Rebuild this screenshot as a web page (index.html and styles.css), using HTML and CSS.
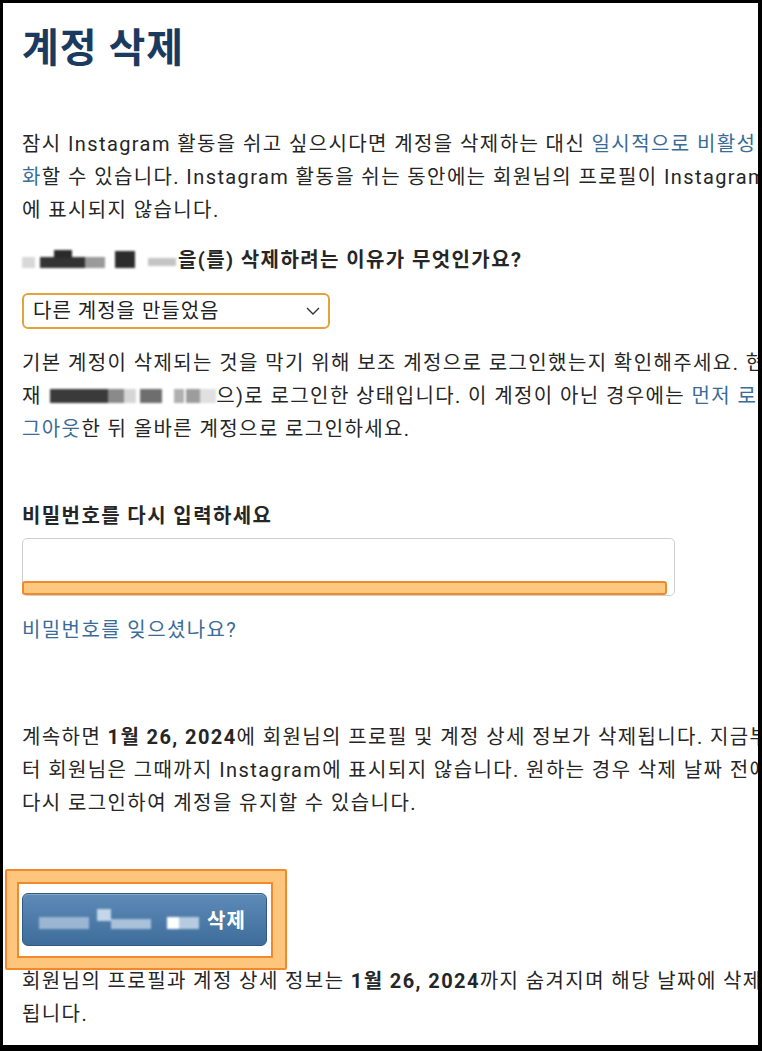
FILE: index.html
```html
<!DOCTYPE html>
<html>

<head>
    <meta charset="utf-8">
    <title>계정 삭제</title>
    <link rel="stylesheet" href="styles.css">
</head>

<body>
    <div class="frame">
        <div class="page">

            <h1 class="title">계정 삭제</h1>

            <p class="text intro">잠시 Instagram 활동을 쉬고 싶으시다면 계정을 삭제하는 대신 <a class="link">일시적으로 비활성<br>화</a>할 수 있습니다. Instagram 활동을 쉬는 동안에는 회원님의 프로필이 Instagram<br>에 표시되지 않습니다.</p>

            <p class="question"><span class="blur q-blur"><i class="b1"></i><i class="b2"></i><i class="b3"></i><i class="b4"></i><i class="b5"></i><i class="b6"></i></span>을(를) 삭제하려는 이유가 무엇인가요?</p>

            <div class="select">
                <span>다른 계정을 만들었음</span>
                <svg class="chevron" width="14" height="8" viewBox="0 0 14 8"><polyline points="1,1 7,7 13,1" fill="none" stroke="#333" stroke-width="1.4"/></svg>
            </div>

            <p class="text notice">기본 계정이 삭제되는 것을 막기 위해 보조 계정으로 로그인했는지 확인해주세요. 현<br>재 <span class="blur u-blur"><i class="c1"></i><i class="c2"></i><i class="c3"></i><i class="c4"></i><i class="c5"></i><i class="c6"></i><i class="c7"></i></span>으)로 로그인한 상태입니다. 이 계정이 아닌 경우에는 <a class="link">먼저 로<br>그아웃</a>한 뒤 올바른 계정으로 로그인하세요.</p>

            <label class="label">비밀번호를 다시 입력하세요</label>
            <div class="input-wrap">
                <div class="input"></div>
                <div class="mark-bar"></div>
            </div>

            <a class="link forgot">비밀번호를 잊으셨나요?</a>

            <p class="text info">계속하면 <b>1월 26, 2024</b>에 회원님의 프로필 및 계정 상세 정보가 삭제됩니다. 지금부<br>터 회원님은 그때까지 Instagram에 표시되지 않습니다. 원하는 경우 삭제 날짜 전에<br>다시 로그인하여 계정을 유지할 수 있습니다.</p>

            <div class="button-wrap">
                <div class="mark-box"><div class="mark-inner"></div></div>
                <button class="delete-btn"><span class="blur btn-blur"><i class="d1"></i><i class="d2"></i><i class="d3"></i><i class="d4"></i><i class="d5"></i></span>삭제</button>
            </div>

            <p class="text last">회원님의 프로필과 계정 상세 정보는 <b>1월 26, 2024</b>까지 숨겨지며 해당 날짜에 삭제<br>됩니다.</p>

        </div>
    </div>
</body>

</html>
```

FILE: styles.css
```css
html, body {
    margin: 0;
    background: #000;
}

.frame {
    box-sizing: border-box;
    width: 762px;
    height: 1051px;
    border-style: solid;
    border-color: #000;
    border-width: 3px 4px 6px 3px;
    background: #fff;
    overflow: hidden;
}

.page {
    padding: 0 0 0 19px;
    font-family: Roboto, "Noto Sans CJK KR", sans-serif;
    font-size: 20px;
    line-height: 33px;
    letter-spacing: 1.4px;
    color: #262626;
    white-space: nowrap;
}

.title {
    margin: 22px 0 0;
    font-size: 40px;
    line-height: 48px;
    font-weight: 700;
    letter-spacing: 1px;
    color: #1b3a60;
}

.text {
    margin: 0;
}

.text b {
    font-weight: 700;
}

.link {
    color: #3a6c98;
    text-decoration: none;
}

.intro {
    margin-top: 55px;
}

.question {
    margin: 17px 0 0;
    font-weight: 700;
}

.blur {
    display: inline-block;
    position: relative;
    vertical-align: middle;
    filter: blur(1.2px);
}

.blur i {
    position: absolute;
    display: block;
}

/* pixelated username in question */
.q-blur {
    width: 156px;
    height: 20px;
    margin-top: -4px;
}
.q-blur .b1 { left: 0; top: 7px; width: 13px; height: 11px; background: #d8d8d8; }
.q-blur .b2 { left: 18px; top: 7px; width: 45px; height: 11px; background: #333; }
.q-blur .b3 { left: 32px; top: 0; width: 18px; height: 8px; background: #2a2a2a; }
.q-blur .b4 { left: 63px; top: 7px; width: 20px; height: 11px; background: #9a9a9a; }
.q-blur .b5 { left: 93px; top: 1px; width: 20px; height: 17px; background: #2c2c2c; }
.q-blur .b6 { left: 126px; top: 8px; width: 28px; height: 8px; background: #c4c4c4; }

.select {
    box-sizing: border-box;
    display: flex;
    align-items: center;
    justify-content: space-between;
    width: 308px;
    height: 36px;
    margin-top: 16px;
    padding: 0 8px 0 9px;
    border: 2.5px solid #e4a23a;
    border-radius: 6px;
    background: #fff;
    color: #222;
    letter-spacing: 1px;
}

.notice {
    margin-top: 18px;
}

/* pixelated username in notice */
.u-blur {
    width: 168px;
    height: 14px;
    margin-top: -3px;
}
.u-blur .c1 { left: 2px; top: 0; width: 58px; height: 14px; background: #3a3a3a; }
.u-blur .c2 { left: 60px; top: 0; width: 16px; height: 14px; background: #8a8a8a; }
.u-blur .c3 { left: 76px; top: 0; width: 12px; height: 14px; background: #d6d6d6; }
.u-blur .c4 { left: 92px; top: 0; width: 22px; height: 14px; background: #6e6e6e; }
.u-blur .c5 { left: 126px; top: 0; width: 10px; height: 14px; background: #b0b0b0; }
.u-blur .c6 { left: 138px; top: 0; width: 14px; height: 14px; background: #9c9c9c; }
.u-blur .c7 { left: 152px; top: 0; width: 16px; height: 14px; background: #e0e0e0; }

.label {
    display: block;
    margin-top: 54px;
    font-weight: 700;
}

.input-wrap {
    position: relative;
    width: 653px;
    height: 58px;
    margin-top: 5px;
}

.input {
    box-sizing: border-box;
    height: 58px;
    border: 1px solid #d0d0d0;
    border-radius: 5px;
    background: #fff;
}

.mark-bar {
    position: absolute;
    left: 0;
    right: 8px;
    bottom: 1px;
    height: 14px;
    box-sizing: border-box;
    border: 2px solid #ee8a2e;
    border-radius: 3px;
    background: #fec97f;
}

.forgot {
    display: block;
    margin-top: 18px;
}

.info {
    margin-top: 74px;
}

.button-wrap {
    position: relative;
    width: 245px;
    margin-top: 73px;
}

.mark-box {
    position: absolute;
    left: -17px;
    top: -24px;
    width: 282px;
    height: 101px;
    box-sizing: border-box;
    border: 2px solid #f08a2c;
    border-radius: 2px;
    background: #fdc67c;
}

.mark-inner {
    position: absolute;
    left: 10px;
    top: 11px;
    width: 256px;
    height: 76px;
    box-sizing: border-box;
    border: 2px solid #f08a2c;
    background: #fff;
}

.delete-btn {
    position: relative;
    display: flex;
    align-items: center;
    width: 245px;
    height: 53px;
    padding: 0 0 0 4px;
    border: 1px solid #2f5a86;
    border-radius: 6px;
    background: linear-gradient(#5d8ab7, #3f6d9b);
    box-shadow: inset 0 1px 0 rgba(255, 255, 255, 0.25);
    font-family: Roboto, "Noto Sans CJK KR", sans-serif;
    font-size: 20px;
    font-weight: 700;
    letter-spacing: 1px;
    color: #fff;
}

/* pixelated username on button */
.btn-blur {
    width: 178px;
    height: 22px;
    margin-right: 2px;
}
.btn-blur .d1 { left: 12px; top: 8px; width: 50px; height: 12px; background: #9bb6d2; }
.btn-blur .d2 { left: 70px; top: 0; width: 14px; height: 12px; background: #c4d6e8; }
.btn-blur .d3 { left: 84px; top: 10px; width: 40px; height: 10px; background: #a9c1da; }
.btn-blur .d4 { left: 140px; top: 8px; width: 12px; height: 12px; background: #ffffff; }
.btn-blur .d5 { left: 152px; top: 8px; width: 20px; height: 12px; background: #b7cbe0; }

.last {
    margin-top: 19px;
}
```
